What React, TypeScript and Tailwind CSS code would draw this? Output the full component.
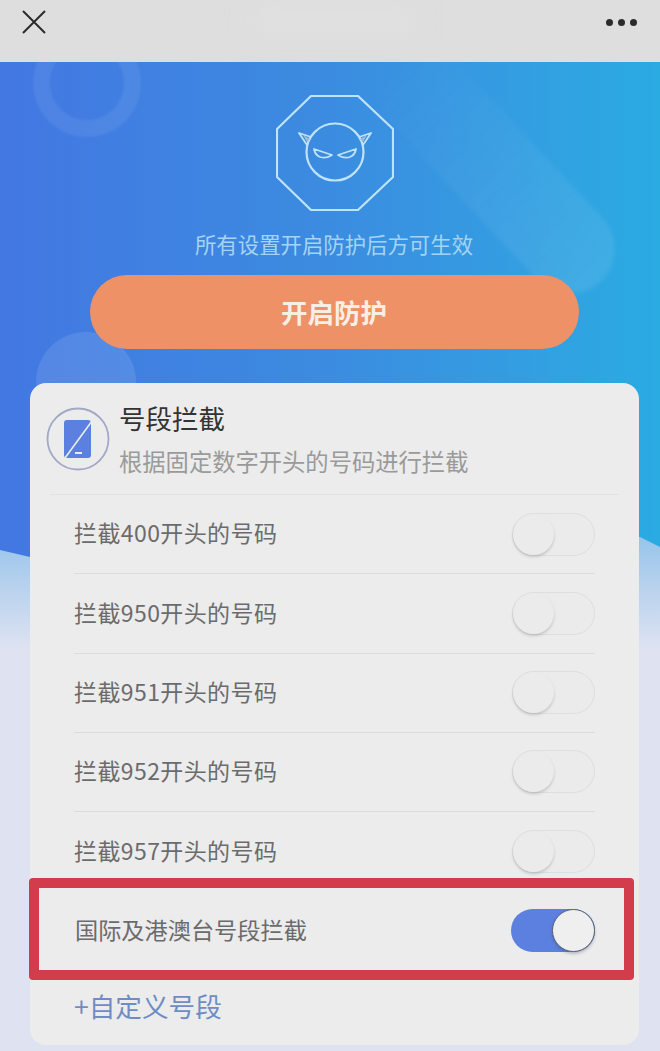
const CJK = { fontFamily: '"Noto Sans CJK SC", "Noto Sans", sans-serif' };

const ROWS = ["拦截400开头的号码", "拦截950开头的号码", "拦截951开头的号码", "拦截952开头的号码", "拦截957开头的号码"];

function Toggle({ on = false }: { on?: boolean }) {
  if (on) {
    return (
      <div className="flex h-[43px] w-[84px] justify-end rounded-full bg-[#5b80e0]">
        <div className="h-[43px] w-[43px] rounded-full border-[1.5px] border-[#566078] bg-[#efeff0] shadow-[0_2px_3px_rgba(60,70,100,0.3)]" />
      </div>
    );
  }
  return (
    <div className="h-[43px] w-[83px] rounded-full border border-[#dedede] bg-[#ebebeb]">
      <div className="h-[41px] w-[41px] rounded-full bg-[#ebebeb] shadow-[0_2px_3px_rgba(0,0,0,0.16)]" />
    </div>
  );
}

function Guard() {
  return (
    <svg width="118" height="116" viewBox="0 0 118 116" fill="none" stroke="#bfe3f7" strokeWidth="2.2">
      <polygon points="35,1 82,1 117,34 117,82 82,115 35,115 1,82 1,34" />
      <circle cx="59" cy="57" r="28.5" />
      <path d="M27 40 L34 44 L31 47 Z M91 40 L84 44 L87 47 Z" fill="#9fb9d6" stroke="none" />
      <path d="M35 42 L23 38 L31 50" strokeLinejoin="round" strokeWidth="1.8" />
      <path d="M83 42 L95 38 L87 50" strokeLinejoin="round" strokeWidth="1.8" />
      <path d="M38 54 L56 60 Q50 64 44 62 Q39 60 38 54 Z M80 54 L62 60 Q68 64 74 62 Q79 60 80 54 Z" strokeWidth="1.8" strokeLinejoin="round" />
    </svg>
  );
}

function PhoneIcon() {
  return (
    <svg width="64" height="64" viewBox="0 0 64 64" fill="none">
      <circle cx="32" cy="32" r="30.5" stroke="#a2a9c6" strokeWidth="1.8" />
      <rect x="18" y="13" width="27" height="38" rx="3" fill="#5b80e0" />
      <path d="M46 14 L19 51" stroke="#ececec" strokeWidth="1.6" />
      <rect x="29" y="45" width="7" height="2" fill="#ececec" />
    </svg>
  );
}

export default function App() {
  return (
    <div className="relative h-[1051px] w-[660px] overflow-hidden bg-[#dfe3f1]" style={CJK}>
      {/* Top bar */}
      <div className="relative z-10 flex h-[62px] items-start justify-between bg-[#dedede] pl-[21px] pr-[23px] pt-[10px]">
        <svg width="26" height="24" viewBox="0 0 26 24" stroke="#2b2b2b" strokeWidth="2" fill="none">
          <path d="M2 1 L24 23 M24 1 L2 23" />
        </svg>
        <div className="absolute left-[250px] top-[6px] h-[30px] w-[170px] bg-[#e0e0e0] blur-md" />
        <div className="mt-[9px] flex gap-[5px]">
          <span className="h-[7px] w-[7px] rounded-full bg-[#2b2b2b]" />
          <span className="h-[7px] w-[7px] rounded-full bg-[#2b2b2b]" />
          <span className="h-[7px] w-[7px] rounded-full bg-[#2b2b2b]" />
        </div>
      </div>

      {/* Blue backdrop */}
      <div className="absolute left-0 top-[530px] h-[120px] w-full bg-gradient-to-b from-[#93c2ea] to-[#dfe3f1]" />
      <div className="absolute left-0 top-[62px] h-[500px] w-[660px] bg-gradient-to-r from-[#4377e2] via-[#3b8ce0] to-[#2aabe2] [clip-path:polygon(0_0,100%_0,100%_485px,640px_475px,30px_495px,0_488px)]" />
      <div className="absolute left-[33px] top-[29px] h-[108px] w-[108px] rounded-full border-[17px] border-white/[0.07] blur-[1px]" />
      <div className="absolute left-[36px] top-[332px] h-[100px] w-[100px] rounded-full bg-white/10" />
      <div className="absolute left-[348px] top-[127px] h-[90px] w-[300px] rotate-[47deg] rounded-[45px] bg-gradient-to-r from-white/0 to-white/[0.09] blur-[2px]" />

      {/* Hero */}
      <div className="relative flex flex-col items-center pt-[33px]">
        <div className="ml-[9px]">
          <Guard />
        </div>
        <p className="ml-[8px] mt-[17px] text-[21.4px] leading-[32px] text-[#a5d3f3]">所有设置开启防护后方可生效</p>
        <button className="ml-[8px] mt-[15px] h-[74px] w-[489px] rounded-full bg-[#ef9167] text-[26.5px] font-bold text-[#f7efe6]">
          开启防护
        </button>
      </div>

      {/* Card */}
      <div className="relative ml-[30px] mt-[34px] h-[662px] w-[609px] rounded-[16px] bg-[#ececec]">
        <div className="mx-[20px] flex h-[112px] items-start border-b border-[#e2e2e2]">
          <div className="ml-[-4px] mt-[24px]">
            <PhoneIcon />
          </div>
          <div className="ml-[9px] mt-[16px]">
            <div className="text-[26.5px] leading-[38px] text-[#333333]">号段拦截</div>
            <div className="mt-[7px] text-[23.3px] leading-[34px] text-[#9a9a9a]">根据固定数字开头的号码进行拦截</div>
          </div>
        </div>

        <div className="px-[44px]">
          {ROWS.map((label, i) => (
            <div
              key={label}
              className={`flex h-[79.25px] items-center justify-between ${i < ROWS.length - 1 ? "border-b border-[#dcdcdc]" : ""}`}
            >
              <span className="mb-[3px] text-[23px] tracking-[0.4px] text-[#6b6b6b]">{label}</span>
              <Toggle />
            </div>
          ))}
          <div className="flex h-[79px] items-center justify-between">
            <span className="mb-[3px] ml-[1px] text-[23.2px] text-[#6b6b6b]">国际及港澳台号段拦截</span>
            <Toggle on />
          </div>
        </div>

        <div className="pl-[44px] pt-[16px] text-[26.6px] leading-[40px] text-[#6f8dc4]">+自定义号段</div>

        {/* Red annotation */}
        <div className="absolute left-[-1px] top-[495px] h-[102px] w-[605px] rounded-[4px] border-[10px] border-[#d23c4b]" />
      </div>
    </div>
  );
}
